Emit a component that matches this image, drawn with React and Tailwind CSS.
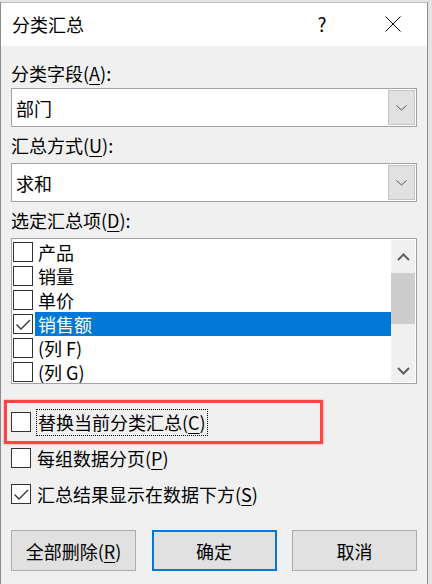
import React from 'react';

const items = [
    { label: '产品', checked: false },
    { label: '销量', checked: false },
    { label: '单价', checked: false },
    { label: '销售额', checked: true, selected: true },
    { label: '(列 F)', checked: false },
    { label: '(列 G)', checked: false },
];

function CheckMark() {
    return (
        <svg width="18" height="18" viewBox="0 0 18 18" className="block">
            <path d="M2.5 9.5 L7 14 L16 5" fill="none" stroke="#333" strokeWidth="1.3" />
        </svg>
    );
}

function Box({ checked }) {
    return (
        <span className="flex h-[20px] w-[20px] shrink-0 items-center justify-center border border-[#333] bg-white">
            {checked && <CheckMark />}
        </span>
    );
}

function Combo({ value }) {
    return (
        <div className="flex h-[39px] items-center border border-[#a3a3a3] bg-white">
            <span className="flex-1 pl-[4px] leading-[24px]">{value}</span>
            <span className="mr-[1px] flex h-[35px] w-[27px] items-center justify-center border border-[#c4c4c4] bg-[#e1e1e1]">
                <svg width="11" height="6" viewBox="0 0 11 6">
                    <path d="M0.5 0.5 L5.5 5 L10.5 0.5" fill="none" stroke="#555" strokeWidth="1" />
                </svg>
            </span>
        </div>
    );
}

function Key({ children }) {
    return <span className="underline decoration-1 underline-offset-[3px]">{children}</span>;
}

export default function App() {
    return (
        <div className="h-[584px] w-[432px] overflow-hidden bg-[#e4e4e4] font-['Noto_Sans_CJK_SC',sans-serif] text-[18px] text-black">
            <div className="mt-[2px] flex h-[582px] w-[428px] flex-col border-x border-t border-x-[#8c8c8c] border-t-[#bcbcbc] bg-[#f0f0f0]">
                {/* 标题栏 */}
                <div className="flex h-[43px] items-center bg-white pb-[2px] pl-[11px] pr-[26px]">
                    <span className="flex-1 text-[18px] leading-[24px]">分类汇总</span>
                    <span className="w-[16px] text-center text-[19px] leading-[24px]">?</span>
                    <svg width="16" height="16" viewBox="0 0 16 16" className="ml-[55px]">
                        <path d="M0.5 0.5 L15.5 15.5 M15.5 0.5 L0.5 15.5" stroke="#000" strokeWidth="1" />
                    </svg>
                </div>

                <div className="flex flex-1 flex-col px-[10px] pt-[15px]">
                    <div className="leading-[24px]">
                        分类字段(<Key>A</Key>):
                    </div>
                    <div className="mt-[3px]">
                        <Combo value="部门" />
                    </div>

                    <div className="mt-[6px] leading-[24px]">
                        汇总方式(<Key>U</Key>):
                    </div>
                    <div className="mt-[6px]">
                        <Combo value="求和" />
                    </div>

                    <div className="mt-[6px] leading-[24px]">
                        选定汇总项(<Key>D</Key>):
                    </div>

                    {/* 列表 */}
                    <div className="mt-[6px] flex h-[146px] overflow-hidden border border-[#a3a3a3] bg-white">
                        <div className="flex-1 pl-[1px] pt-[1px]">
                            {items.map((it) => (
                                <div key={it.label} className="flex h-[24px] items-center">
                                    <Box checked={it.checked} />
                                    <span
                                        className={`ml-[2px] flex-1 pl-[3px] leading-[24px] ${
                                            it.selected ? 'bg-[#0078d7] text-white' : ''
                                        }`}
                                    >
                                        {it.label}
                                    </span>
                                </div>
                            ))}
                        </div>
                        <div className="my-[1px] mr-[1px] flex w-[24px] flex-col bg-[#f0f0f0]">
                            <div className="flex h-[33px] items-center justify-center">
                                <svg width="13" height="8" viewBox="0 0 13 8">
                                    <path d="M1 7 L6.5 1.5 L12 7" fill="none" stroke="#606060" strokeWidth="2" />
                                </svg>
                            </div>
                            <div className="h-[51px] bg-[#cdcdcd]" />
                            <div className="flex flex-1 items-end justify-center pb-[7px]">
                                <svg width="13" height="8" viewBox="0 0 13 8">
                                    <path d="M1 1 L6.5 6.5 L12 1" fill="none" stroke="#606060" strokeWidth="2" />
                                </svg>
                            </div>
                        </div>
                    </div>

                    {/* 选项 */}
                    <div className="mt-[20px] flex flex-col">
                        <div className="relative flex h-[36px] items-center">
                            <Box checked={false} />
                            <span className="ml-[5px] border border-dotted border-black px-[1px] leading-[25px]">
                                替换当前分类汇总(<Key>C</Key>)
                            </span>
                            <div className="absolute left-[-7px] top-[-4px] h-[44px] w-[319px] border-[3px] border-[#ff4545] shadow-[0_0_2px_#ff8080]" />
                        </div>
                        <div className="flex h-[36px] items-center">
                            <Box checked={false} />
                            <span className="ml-[6px] leading-[24px]">
                                每组数据分页(<Key>P</Key>)
                            </span>
                        </div>
                        <div className="flex h-[36px] items-center">
                            <Box checked />
                            <span className="ml-[6px] leading-[24px]">
                                汇总结果显示在数据下方(<Key>S</Key>)
                            </span>
                        </div>
                    </div>

                    {/* 按钮 */}
                    <div className="mt-[18px] flex justify-between">
                        <button className="h-[41px] w-[125px] border border-[#adadad] bg-[#e1e1e1] leading-[24px]">
                            全部删除(<Key>R</Key>)
                        </button>
                        <button className="h-[41px] w-[125px] border-2 border-[#0078d7] bg-[#e1e1e1] leading-[24px]">
                            确定
                        </button>
                        <button className="h-[41px] w-[125px] border border-[#adadad] bg-[#e1e1e1] leading-[24px]">
                            取消
                        </button>
                    </div>
                </div>
            </div>
        </div>
    );
}
